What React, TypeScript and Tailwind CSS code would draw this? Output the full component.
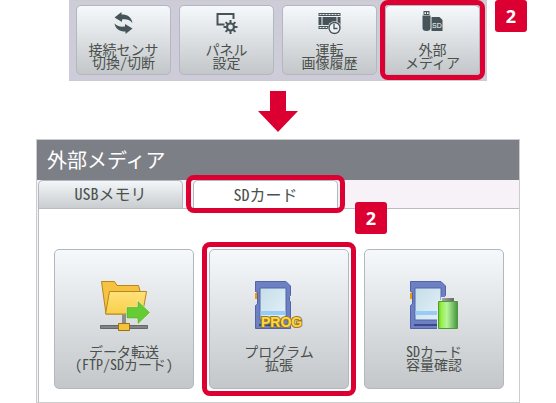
import { useState } from "react";
import type { ReactNode } from "react";
import clsx from "clsx";

const INK = "#46545a";

// --- TOOLBAR ICONS ---
function SwapIcon() {
    return (
        <svg viewBox="0 0 24 24" className="size-6" fill={INK} aria-hidden="true">
            <path d="M2.500 5.500 L9.500 0 V2.500 C15.500 2.500 19.500 5 20.500 11 C17.500 7.800 14.500 7 10 7.500 V10 Z" />
            <path d="M20.500 16.500 L13.500 22 V19.500 C7.500 19.500 3.500 17 2.500 11.500 C5.500 14.200 8.500 15 13 14.500 V12 Z" />
        </svg>
    );
}

function PanelGearIcon() {
    return (
        <svg viewBox="0 0 24 24" className="size-6" fill="none" stroke={INK} aria-hidden="true">
            <path d="M9.500 12.500 H2.500 V2 H18.500 V7" strokeWidth="2" />
            <circle cx="15.500" cy="15" r="3.500" strokeWidth="2.200" />
            <path
                d="M15.500 8 V11.500 M15.500 18.500 V22 M8.500 15 H12 M19 15 H22.500 M10.600 10.100 L13 12.500 M18 17.500 L20.400 19.900 M20.400 10.100 L18 12.500 M13 17.500 L10.600 19.900"
                strokeWidth="2"
            />
        </svg>
    );
}

function FilmClockIcon() {
    return (
        <svg viewBox="0 0 24 24" className="size-6 overflow-visible" aria-hidden="true">
            <path d="M.5 1 H22.500 V4 H.5 Z M.5 5 H22.500 V13 H.5 Z M.5 14 H11 V17 H.5 Z" fill={INK} />
            <path d="M1.500 2.500 H22.500 M1.500 15.500 H9" stroke="#eef1f4" strokeDasharray="2 1" />
            <path d="M4 5 V13 M19 5 V13" stroke="#eef1f4" />
            <circle cx="16.500" cy="16" r="6.800" fill="#eef1f4" />
            <circle cx="16.500" cy="16" r="5.500" fill="none" stroke={INK} strokeWidth="1.400" />
            <path d="M16 12 V16.500 H19.500" fill="none" stroke={INK} strokeWidth="1.300" />
        </svg>
    );
}

function MediaIcon() {
    return (
        <svg viewBox="0 0 24 24" className="size-6 overflow-visible" aria-hidden="true">
            <path d="M2.500 -1 H8.500 V3 H2.500 Z" fill={INK} />
            <path d="M3.500 .3 H5 V2 H3.500 Z M6 .3 H7.500 V2 H6 Z" fill="#f5f9fc" />
            <path d="M1.500 3.500 H9.500 V16 Q9.500 19 5.500 19 Q1.500 19 1.500 16 Z" fill={INK} />
            <path d="M10.500 5 H18.500 L21.500 8 V19 H10.500 Z" fill={INK} />
            <text x="11" y="15.500" fontSize="7" fontFamily="Liberation Sans" fill="#ffffff">
                SD
            </text>
        </svg>
    );
}

// --- CARD ICONS ---
function FolderTransferIcon() {
    return (
        <svg viewBox="0 0 48 48" className="size-12 overflow-visible" aria-hidden="true">
            <defs>
                <linearGradient id="folder" x1="0" y1="0" x2="0" y2="1">
                    <stop offset="0" stopColor="#ffe27a" />
                    <stop offset="1" stopColor="#f8cf4a" />
                </linearGradient>
            </defs>
            <path d="M1.500 .5 H14.500 L17 4.500 H38.500 L40 10 V33 H6 Z" fill="#f5c242" stroke="#b8861c" />
            <path d="M9.500 10.500 H46.500 L42.500 33 H5.500 Z" fill="url(#folder)" stroke="#b8861c" />
            <path d="M22 33.500 H26 V43 H22 Z" fill="#8d8d8d" />
            <path d="M.5 44.500 H47.500 V47.500 H.5 Z" fill="#848484" stroke="#666666" />
            <path d="M18.500 42.500 H29.500 V49.500 H18.500 Z" fill="#f3c33c" stroke="#9c6f12" />
            <path
                d="M27 26.500 H38 V20.500 L49.500 31.500 L38 42.500 V37 H27 Z"
                fill="#66cc33"
                stroke="#f4f5d8"
                strokeWidth="1.500"
                paintOrder="stroke"
            />
            <path d="M27 26.500 H38 V20.500 L49.500 31.500 L38 42.500 V37 H27 Z" fill="none" stroke="#4ba62c" strokeWidth=".6" />
        </svg>
    );
}

function SdBody() {
    return (
        <>
            <defs>
                <linearGradient id="sdLabel" x1="0" y1="0" x2="1" y2="1">
                    <stop offset="0" stopColor="#c5dde8" />
                    <stop offset="1" stopColor="#e4f1f8" />
                </linearGradient>
            </defs>
            <path
                d="M.5 .5 H31 L35.500 5 V14.500 L34.500 15.500 V19.500 L35.500 20.500 V47.500 H.5 V24.500 L2.500 23 V11.500 L.5 10.500 Z"
                fill="#6d80c2"
                stroke="#5063ac"
            />
            <path d="M0 12 H2 V18 H0 Z" fill="#f09a00" />
            <path d="M5 7 H31 V39 H5 Z" fill="url(#sdLabel)" stroke="#5264ac" />
            <path d="M5.500 30 H30.500 V34 H5.500 Z" fill="#99ccf5" />
            <path d="M4 43 H32 V45 H4 Z" fill="#3c4888" />
        </>
    );
}

function SdProgramIcon() {
    return (
        <svg viewBox="0 0 48 48" className="size-12 overflow-visible" aria-hidden="true">
            <SdBody />
            <text
                x="6"
                y="46"
                fontSize="14"
                fontFamily="Liberation Sans"
                fontWeight="700"
                fill="#ffd83c"
                stroke="#9c7a2c"
                strokeWidth="2"
                paintOrder="stroke"
            >
                PROG
            </text>
        </svg>
    );
}

function SdCapacityIcon() {
    return (
        <svg viewBox="0 0 48 48" className="size-12 overflow-visible" aria-hidden="true">
            <defs>
                <linearGradient id="battery">
                    <stop offset="0" stopColor="#66cc22" />
                    <stop offset=".15" stopColor="#99f048" />
                    <stop offset=".45" stopColor="#b5f59a" />
                    <stop offset="1" stopColor="#459440" />
                </linearGradient>
                <linearGradient id="batteryCap">
                    <stop offset="0" stopColor="#a8a8ac" />
                    <stop offset="1" stopColor="#66666c" />
                </linearGradient>
            </defs>
            <SdBody />
            <path d="M27 19 H31 V16 H45 V19 H48 V48 H27 Z" fill="#e6eaee" />
            <path d="M32 17 H44 V20 H32 Z" fill="url(#batteryCap)" />
            <path d="M28.500 20.500 H47.500 V47.500 H28.500 Z" fill="url(#battery)" stroke="#4d9a3a" />
        </svg>
    );
}

// --- CALLOUTS ---
function Frame({ className }: { className: string }) {
    return (
        <span className={clsx("pointer-events-none absolute z-10 rounded-lg border-[5px] border-[#dc0032]", className)} />
    );
}

function Step({ className }: { className: string }) {
    return (
        <span
            className={clsx(
                "absolute flex size-8 items-center justify-center rounded-[3px] bg-[#dc0032] font-['Open_Sans',sans-serif] text-lg font-bold text-white",
                className
            )}
        >
            2
        </span>
    );
}

type Item = { lines: string[]; icon: ReactNode; marked?: boolean };

const TOOLS: Item[] = [
    { lines: ["接続センサ", "切換/切断"], icon: <SwapIcon /> },
    { lines: ["パネル", "設定"], icon: <PanelGearIcon /> },
    { lines: ["運転", "画像履歴"], icon: <FilmClockIcon /> },
    { lines: ["外部", "メディア"], icon: <MediaIcon />, marked: true },
];

const CARDS: Item[] = [
    { lines: ["データ転送", "(FTP/SDカード)"], icon: <FolderTransferIcon /> },
    { lines: ["プログラム", "拡張"], icon: <SdProgramIcon />, marked: true },
    { lines: ["SDカード", "容量確認"], icon: <SdCapacityIcon /> },
];

const TABS = ["USBメモリ", "SDカード"];

function Label({ lines }: { lines: string[] }) {
    return (
        <span className="flex flex-col items-center text-sm leading-[13px] whitespace-nowrap">
            {lines.map((line) => (
                <span key={line}>{line}</span>
            ))}
        </span>
    );
}

export default function App() {
    const [activeTab, setActiveTab] = useState(1);

    return (
        <main className="bg-white font-['Noto_Sans_CJK_JP',sans-serif] text-[#4b504d] [font-feature-settings:'hwid']">
            {/* Toolbar */}
            <nav className="relative mx-[69px] flex gap-2 border-y border-[#cccccc] bg-[#cdccd8] px-[7px] pt-1 pb-[5px]">
                {TOOLS.map((tool) => (
                    <div key={tool.lines[0]} className="relative flex-1">
                        <button
                            type="button"
                            className="flex h-[70px] w-full flex-col items-center gap-[7px] rounded-[5px] border border-[#b3b7bf] bg-linear-to-b from-[#f5f9fc] to-[#c3c7c9] pt-[6px]"
                        >
                            {tool.icon}
                            <Label lines={tool.lines} />
                        </button>
                        {tool.marked && <Frame className="-inset-[5px]" />}
                    </div>
                ))}
                <Step className="-top-px left-full ml-2" />
            </nav>

            <svg viewBox="0 0 40 41" className="mx-auto mt-[10px] h-[41px] w-10" fill="#dc0032" aria-hidden="true">
                <path d="M12 0 H28 V20 H40 L20 41 L0 20 H12 Z" />
            </svg>

            {/* External media panel */}
            <section className="mx-9 mt-[7px] border border-[#cccccc] bg-[#f6f2f7]">
                <h1 className="flex h-10 items-center bg-[#7d7f87] px-[10px] text-xl text-white">外部メディア</h1>

                <div className="relative ml-px flex h-7 gap-[10px]">
                    {TABS.map((tab, i) => (
                        <div key={tab} className="relative w-[145px]">
                            <button
                                type="button"
                                onClick={() => setActiveTab(i)}
                                className={clsx(
                                    "w-full rounded-t-[5px] border border-b-0 border-[#b3b7bf] pb-[3px] text-base leading-6",
                                    i === activeTab
                                        ? "relative z-5 h-[29px] bg-white"
                                        : "h-7 bg-linear-to-b from-[#f3f7fa] to-[#c9cdd0]"
                                )}
                            >
                                {tab}
                            </button>
                            {i === 1 && (
                                <>
                                    <Frame className="-inset-x-[7px] -top-[5px] -bottom-[5px]" />
                                    <Step className="top-[22px] left-full ml-[17px]" />
                                </>
                            )}
                        </div>
                    ))}
                </div>

                <div className="ml-px flex gap-[15px] border-t border-l border-[#b9bcc0] bg-white px-[15px] pt-10 pb-[13px]">
                    {CARDS.map((card) => (
                        <div key={card.lines[0]} className="relative flex-1">
                            <button
                                type="button"
                                className="flex h-[140px] w-full flex-col items-center gap-4 rounded-[5px] border border-[#b3b7bf] bg-linear-to-b from-[#f5f9fc] to-[#c3c7c9] pt-[31px]"
                            >
                                {card.icon}
                                <Label lines={card.lines} />
                            </button>
                            {card.marked && <Frame className="-inset-[7px]" />}
                        </div>
                    ))}
                </div>
            </section>
        </main>
    );
}
